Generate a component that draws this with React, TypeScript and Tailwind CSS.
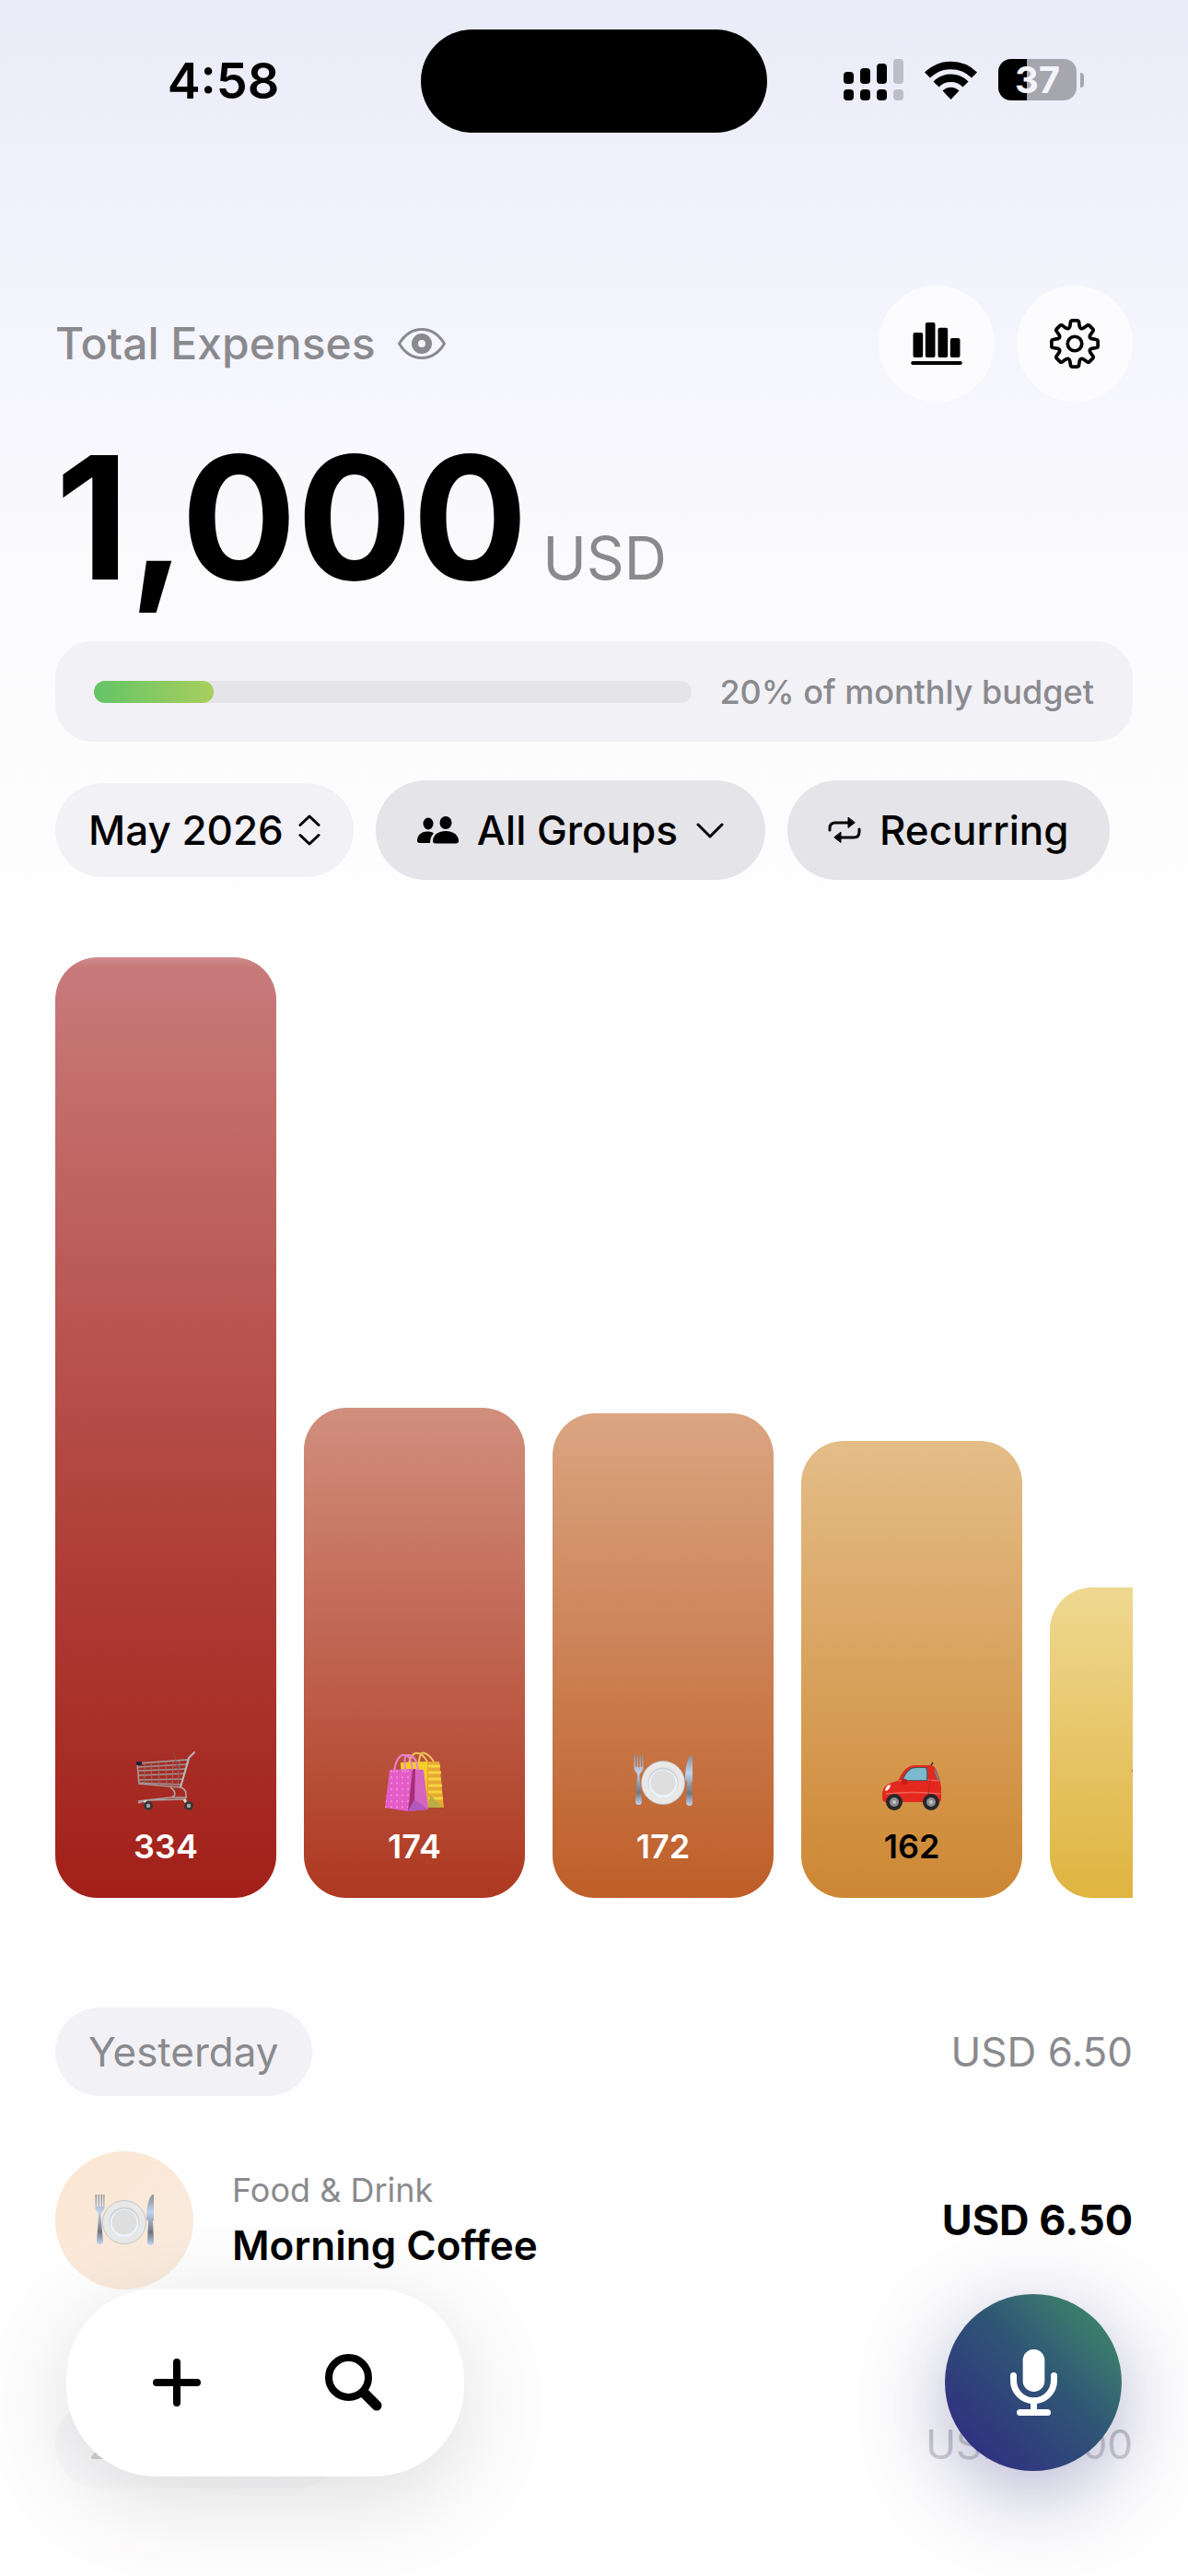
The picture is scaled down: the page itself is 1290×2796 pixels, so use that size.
import { useState } from "react";
import type { ReactNode } from "react";
import clsx from "clsx";

type EmojiName = "cart" | "bags" | "plate" | "car" | "coffee";

interface Category {
  icon: EmojiName;
  amount?: number;
  height: number;
  fill: string;
  text: string;
}

const CATEGORIES: Category[] = [
  {
    icon: "cart",
    amount: 334,
    height: 1021,
    fill: "bg-linear-[180deg,#d18c8e_0%,#c87a7a_1%,#b2453f_56%,#a22018_100%]",
    text: "text-white",
  },
  {
    icon: "bags",
    amount: 174,
    height: 532,
    fill: "bg-linear-[180deg,#d18f7e,#ae3820]",
    text: "text-white",
  },
  {
    icon: "plate",
    amount: 172,
    height: 526,
    fill: "bg-linear-[180deg,#daa582,#be5e28]",
    text: "text-white",
  },
  {
    icon: "car",
    amount: 162,
    height: 496,
    fill: "bg-linear-[180deg,#e4bd88,#cd8733]",
    text: "text-black",
  },
  {
    icon: "coffee",
    height: 337,
    fill: "bg-linear-[180deg,#efd891,#dfb440]",
    text: "text-black",
  },
];

const MONTHLY_BUDGET_USED = 20;

// Eight-tooth gear outline around (80, 80)
const gearPath = () => {
  const at = (radius: number, deg: number) => {
    const rad = ((deg - 90) * Math.PI) / 180;
    return `${(80 + radius * Math.cos(rad)).toFixed(1)} ${(80 + radius * Math.sin(rad)).toFixed(1)}`;
  };
  let d = "";
  for (let i = 0; i < 8; i++) {
    const a = i * 45;
    d += `${i === 0 ? "M" : "L"}${at(70, a - 11)} Q${at(75, a - 10)} ${at(75, a - 6)} L${at(75, a + 6)} Q${at(75, a + 10)} ${at(70, a + 11)} `;
    d += `L${at(57, a + 16)} Q${at(49, a + 22.5)} ${at(57, a + 29)} `;
  }
  return d + "Z";
};

function CartEmoji() {
  return (
    <svg viewBox="0 0 66 66" className="size-[66px]" fill="none" aria-hidden="true">
      <path d="M2 14 58 10 49 40 4 36Z" stroke="#a39a98" strokeWidth="1.6" />
      <path d="M3 18 56 15M3 22 55 20M3 27 53 25M4 32 52 31M3 35 50 37" stroke="#a09593" strokeWidth="1.3" />
      <path d="M10 14v22M17 13l1 24M25 13l1 25M33 12l1 26M41 12l-1 27M48 11l-2 28" stroke="#94706c" strokeWidth="1" />
      <path d="M42 2l2 10 4 14" stroke="#8c4d4a" strokeWidth="1" />
      <path d="M64 2 58 8 49 40" stroke="#b9b5b4" strokeWidth="2" strokeLinecap="round" />
      <path d="M38 40c6 4 7 10 0 11L3 55M50 40c6 4 5 6 5 12M3 57l10-3 42-1M40 51h14" stroke="#aaa3a2" strokeWidth="1.7" />
      <path d="M10 54l4 8M53 53l5 8" stroke="#d9d7d6" strokeWidth="3" />
      <rect x="1" y="12" width="6" height="4" rx="1" fill="#1d2440" />
      <circle cx="14" cy="60" r="5" fill="#3a3636" />
      <circle cx="14" cy="60" r="2.2" fill="#a9a5a4" />
      <circle cx="58" cy="60" r="5" fill="#3a3636" />
      <circle cx="58" cy="60" r="2.2" fill="#a9a5a4" />
    </svg>
  );
}

function BagsEmoji() {
  return (
    <svg viewBox="0 0 66 66" className="size-[66px]" fill="none" aria-hidden="true">
      <defs>
        <pattern id="bag-dots" width="6" height="6.5" patternUnits="userSpaceOnUse">
          <circle cx="2" cy="3" r="0.9" fill="#f9a6e2" />
        </pattern>
      </defs>
      <path d="M27 14C29 5 33 2 37 3c4 0 7 4 10 9M38 14C38 5 41 1 44 3c4 1 8 6 10 9" stroke="#eec35c" strokeWidth="2" />
      <path d="M18 13 47 12 49 62 20 60Z" fill="#f4cf28" />
      <path d="M47 12h13l5 50H46Z" fill="#e8a733" />
      <path d="M48 17h13M48 24h14M48 31h14M48 38h15M48 45h15M48 52h16" stroke="#f6d440" strokeWidth="3" />
      <path d="M50 48 64 62H48Z" fill="#b9ab42" />
      <path d="M6 21 31 20 26 66 1 62Z" fill="#e45cc7" />
      <path d="M6 21 31 20 26 66 1 62Z" fill="url(#bag-dots)" />
      <path d="M31 20 43 21 48 64 26 66Z" fill="#d565c0" />
      <path d="M31 20h3l-1 34-7 12Z" fill="#a92c78" />
      <path d="M33 53 48 64 26 66Z" fill="#b158bd" />
      <path d="M11 24C12 10 18 4 22 5c5 0 8 6 9 16M23 24C22 9 22 4 27 5c6 1 9 7 10 16" stroke="#e884cf" strokeWidth="2" />
    </svg>
  );
}

function PlateEmoji() {
  return (
    <svg viewBox="0 0 66 66" className="size-[66px]" aria-hidden="true">
      <defs>
        <linearGradient id="steel" x1="0" y1="0" x2="0" y2="1">
          <stop offset="0" stopColor="#8b8d94" />
          <stop offset="0.35" stopColor="#bfd3ee" />
          <stop offset="0.75" stopColor="#70757f" />
          <stop offset="1" stopColor="#c3d8f4" />
        </linearGradient>
      </defs>
      <path
        d="M1.500 5v14c0 4 4 4 3.500 9L3 56c0 4 7 4 7 0L7.500 28c0-5 4-5 4-9V5h-1.300v13H9V5H7.500v13H6V5H4.500v13H3V5Z"
        fill="url(#steel)"
      />
      <path d="M64 5c-4 1-7 14-7 26 0 2 2 2 2 3l-1 23c0 4 7 4 7 0l-1-23 1-1V5Z" fill="url(#steel)" />
      <circle cx="33" cy="35" r="23.500" fill="#e8e8e8" stroke="#bcbcbe" strokeWidth="0.800" />
      <circle cx="33" cy="35" r="16.500" fill="#cfd2d8" />
      <circle cx="33" cy="36" r="15.500" fill="#edf2fb" />
      <circle cx="33" cy="35" r="13.500" fill="#dedede" />
    </svg>
  );
}

function CarEmoji() {
  return (
    <svg viewBox="0 0 66 66" className="size-[66px]" aria-hidden="true">
      <path d="M53 18 56 13" stroke="#403436" strokeWidth="1.600" />
      <path
        d="M1 50c0-9 3-14 17-17 5-10 9-17 20-17h13c5 0 7 1 9 6 2 5 4 10 5 18v12c0 3-1 4-3 4H5c-3 0-4-2-4-6Z"
        fill="#e2281f"
      />
      <path d="M19 33c8-1 28-2 44 0M5 47c18-2 38-2 59 0" stroke="#f26358" strokeWidth="1.300" fill="none" />
      <path d="M22 33C26 22 31 18 38 18h11c2 5 2 10 1 15Z" fill="#4a5860" />
      <path d="M24 32C27 23 32 19 38 19h10c2 5 1 9 1 13Z" fill="#7cb9cc" />
      <path d="M57 19c3 4 5 9 6 15-3-3-5-9-6-15Z" fill="#5a8b9a" />
      <path d="M53 32 50 56" stroke="#bb1c18" strokeWidth="0.800" />
      <rect x="22" y="31" width="6" height="6" rx="2" fill="#c81d18" />
      <path d="M4 43c1-4 3-6 6-6 0 3-2 6-5 7Z" fill="#fff3ed" />
      <circle cx="14" cy="56" r="9" fill="#27272a" />
      <circle cx="14" cy="56" r="5" fill="#8d8d90" />
      <circle cx="14" cy="56" r="2" fill="#c6c6c8" />
      <circle cx="54" cy="56" r="9" fill="#27272a" />
      <circle cx="54" cy="56" r="5" fill="#8d8d90" />
      <circle cx="54" cy="56" r="2" fill="#c6c6c8" />
    </svg>
  );
}

function CoffeeEmoji() {
  return (
    <svg viewBox="0 0 66 66" className="size-[66px]" aria-hidden="true">
      <ellipse cx="33" cy="22" rx="31" ry="6" fill="#a2613b" />
    </svg>
  );
}

const EMOJI: Record<EmojiName, () => ReactNode> = {
  cart: CartEmoji,
  bags: BagsEmoji,
  plate: PlateEmoji,
  car: CarEmoji,
  coffee: CoffeeEmoji,
};

function StatusBar() {
  return (
    <div className="grid grid-cols-[1fr_376px_1fr] items-center pt-8">
      <div className="pl-7 text-center text-[54px] leading-[64px] font-semibold">4:58</div>
      <div className="h-28 rounded-full bg-black" />
      <div className="flex items-center justify-center gap-[23px] pr-[30px] pb-[3px]">
        <svg viewBox="0 0 65 45" className="h-[45px] w-[65px]" aria-hidden="true">
          <rect x="0" y="14" width="11" height="13" rx="4" />
          <rect x="18" y="10" width="11" height="17" rx="4" />
          <rect x="36" y="5" width="11" height="22" rx="4" />
          <rect x="54" y="0" width="11" height="27" rx="4" fill="#bdbdc8" />
          <rect x="0" y="33" width="11" height="12" rx="4" />
          <rect x="18" y="33" width="11" height="12" rx="4" />
          <rect x="36" y="33" width="11" height="12" rx="4" />
          <rect x="54" y="33" width="11" height="12" rx="4" fill="#bdbdc8" />
        </svg>
        <svg viewBox="0 0 57 42" className="h-[42px] w-[57px]" fill="none" aria-hidden="true">
          <path d="M3 15.500a36.500 36.500 0 0 1 51 0" stroke="#000" strokeWidth="8.500" />
          <path d="M12.500 25.500a22.500 22.500 0 0 1 32 0" stroke="#000" strokeWidth="8.500" />
          <path d="M28.500 42l-9-9.500a12.500 12.500 0 0 1 18 0Z" fill="#000" />
        </svg>
        <div className="flex items-center gap-1">
          <div className="flex h-[45px] w-[85px] items-center justify-center rounded-[14px] bg-linear-[90deg,#000_31px,#a6a6af_31px] text-[40px] leading-[45px] font-bold text-[#f4f4fb]">
            37
          </div>
          <div className="h-4 w-1 rounded-r-full bg-[#a6a6af]" />
        </div>
      </div>
    </div>
  );
}

function RoundButton({ label, children }: { label: string; children: ReactNode }) {
  return (
    <button aria-label={label} className="flex size-[126px] items-center justify-center rounded-full bg-white/70">
      {children}
    </button>
  );
}

function DayHeader({ day, total }: { day: string; total: string }) {
  return (
    <div className="flex items-center justify-between text-[44px] leading-[96px] text-[#8a8a8e]">
      <h2 className="rounded-full bg-[#f2f1f6] px-9">{day}</h2>
      <span>{total}</span>
    </div>
  );
}

export default function App() {
  const [hidden, setHidden] = useState(false);

  return (
    <div className="relative h-screen overflow-hidden bg-[#fdfdfe] bg-linear-[180deg,#e9ebf8_0px,#f4f4fd_320px,#fbfbfd_640px,#fefefe_1000px] font-['Inter','Liberation_Sans',sans-serif] text-black">
      <StatusBar />

      <main className="px-[60px] pt-[166px]">
        <header className="flex items-center justify-between">
          <div className="flex items-center gap-6 text-[#8a8a8e]">
            <h1 className="text-[48px] leading-[60px] font-medium">Total Expenses</h1>
            <button aria-label="Toggle amounts" onClick={() => setHidden(!hidden)}>
              <svg viewBox="0 0 52 34" className="h-[34px] w-[52px]" fill="none" stroke="currentColor" aria-hidden="true">
                <path d="M1.500 17C7 8 15 1.500 26 1.500S45 8 50.500 17C45 26 37 32.500 26 32.500S7 26 1.500 17Z" strokeWidth="3" />
                <circle cx="26" cy="17" r="7.500" strokeWidth="7" />
              </svg>
            </button>
          </div>
          <div className="flex gap-6">
            <RoundButton label="Statistics">
              <svg viewBox="0 0 167 138" className="h-[46px] w-14" aria-hidden="true">
                <rect x="7" y="33" width="32" height="81" rx="6" />
                <rect x="47" y="0" width="32" height="114" rx="6" />
                <rect x="88" y="17" width="32" height="97" rx="6" />
                <rect x="128" y="51" width="32" height="63" rx="6" />
                <rect x="0" y="126" width="167" height="12" rx="6" />
              </svg>
            </RoundButton>
            <RoundButton label="Settings">
              <svg viewBox="0 0 160 160" className="size-[54px]" fill="none" stroke="#000" strokeWidth="11" strokeLinejoin="round" aria-hidden="true">
                <path d={gearPath()} />
                <circle cx="80" cy="80" r="23" />
              </svg>
            </RoundButton>
          </div>
        </header>

        <p className="mt-8 flex items-baseline gap-4">
          <span className="text-[186px] leading-[188px] font-bold">{hidden ? "•••" : "1,000"}</span>
          <span className="text-[64px] text-[#8a8a8e]">USD</span>
        </p>

        <section className="mt-10 flex h-[109px] items-center gap-[30px] rounded-[40px] bg-[#f2f1f6] px-[42px]">
          <div
            role="progressbar"
            aria-label="Monthly budget"
            aria-valuenow={MONTHLY_BUDGET_USED}
            className="h-6 flex-1 rounded-full bg-[#e5e4e9]"
          >
            <div
              className="h-full rounded-full bg-linear-[90deg,#63c466,#a9ce5e]"
              style={{ width: `${MONTHLY_BUDGET_USED}%` }}
            />
          </div>
          <span className="text-[36px] leading-[44px] font-medium text-[#8a8a8e]">
            {MONTHLY_BUDGET_USED}% of monthly budget
          </span>
        </section>

        <nav className="mt-[42px] flex items-center gap-6 text-[44px] font-medium whitespace-nowrap">
          <button className="flex h-[102px] items-center gap-4 rounded-full bg-[#f2f1f6] px-9">
            May 2026
            <svg viewBox="0 0 24 34" className="h-[34px] w-6" fill="none" stroke="#000" strokeWidth="3" strokeLinecap="round" strokeLinejoin="round" aria-hidden="true">
              <path d="M2 11.500 12 2l10 9.500M2 22.500 12 32l10-9.500" />
            </svg>
          </button>
          <button className="flex h-[108px] items-center gap-5 rounded-full bg-[#e5e4e9] px-[45px]">
            <svg viewBox="0 0 45 30" className="h-[30px] w-[45px]" aria-hidden="true">
              <ellipse cx="12" cy="8" rx="5.500" ry="6.500" />
              <path d="M0 27c0-6 4-10.500 11-10.500 3 0 5 .500 7 2-3 3-4 6-4 10.500H3c-2 0-3-1-3-2Z" />
              <ellipse cx="31" cy="7" rx="6.500" ry="7" />
              <path d="M17 27c0-6 5-11 14-11s14 5 14 11c0 1.500-1 2.500-3 2.500H20c-2 0-3-1-3-2.500Z" />
            </svg>
            All Groups
            <svg viewBox="0 0 30 17" className="h-[17px] w-[30px]" fill="none" stroke="#000" strokeWidth="3" strokeLinecap="round" strokeLinejoin="round" aria-hidden="true">
              <path d="M2 2l13 13L28 2" />
            </svg>
          </button>
          <button className="flex h-[108px] items-center gap-5 rounded-full bg-[#e5e4e9] px-11">
            <svg viewBox="0 0 36 30" className="h-[30px] w-9" fill="none" stroke="#000" strokeWidth="3" strokeLinecap="round" aria-hidden="true">
              <path d="M2 15v-2c0-4 2-6 6-6h14M34 14v3c0 4-2 6-6 6H14" />
              <path d="M22 1.500v11l7-5.500ZM14 17.500v11L7 23Z" fill="#000" strokeWidth="1" strokeLinejoin="round" />
            </svg>
            Recurring
          </button>
        </nav>

        <section aria-label="Expenses by category" className="mt-[84px] flex items-end gap-[30px] overflow-hidden">
          {CATEGORIES.map(({ icon, amount, height, fill, text }) => {
            const Icon = EMOJI[icon];
            return (
              <div
                key={icon}
                className={clsx(
                  "flex w-60 shrink-0 flex-col items-center justify-end rounded-[46px] pb-[34px] text-[36px] leading-[44px] font-semibold",
                  fill,
                  text,
                )}
                style={{ height }}
              >
                <Icon />
                <span className="h-[60px] pt-4">{amount}</span>
              </div>
            );
          })}
        </section>

        <section className="mt-[119px]">
          <DayHeader day="Yesterday" total="USD 6.50" />
          <div className="mt-[60px] flex items-center gap-[42px]">
            <div className="flex size-[150px] items-center justify-center rounded-full bg-linear-[135deg,#fce6d2,#f8ece0]">
              <PlateEmoji />
            </div>
            <div className="flex-1">
              <p className="text-[36px] leading-[54px] text-[#8a8a8e]">Food &amp; Drink</p>
              <p className="text-[44px] leading-[66px] font-semibold">Morning Coffee</p>
            </div>
            <span className="text-[45px] leading-[60px] font-bold">USD 6.50</span>
          </div>
        </section>

        <section className="mt-[120px]">
          <DayHeader day="28 Apr, Tue" total="USD 26.00" />
          <div className="mt-[60px] size-[150px] rounded-full bg-[#fbdcdc]" />
        </section>
      </main>

      <div className="absolute inset-x-0 bottom-0 flex h-[316px] items-start justify-between bg-linear-[180deg,#fefefe00,#fefefe_96%] px-[72px]">
        <div className="mt-1 flex h-[204px] items-center rounded-[98px] bg-white px-6 shadow-[0_24px_100px_rgba(0,0,0,0.13)]">
          <button aria-label="Add expense" className="flex h-full w-48 items-center justify-center">
            <svg viewBox="0 0 52 52" className="size-[52px]" stroke="#000" strokeWidth="8" strokeLinecap="round" aria-hidden="true">
              <path d="M26 4v44M4 26h44" />
            </svg>
          </button>
          <button aria-label="Search" className="flex h-full w-48 items-center justify-center">
            <svg viewBox="0 0 62 62" className="size-[62px]" fill="none" stroke="#000" strokeLinecap="round" aria-hidden="true">
              <circle cx="25.500" cy="25.500" r="21.500" strokeWidth="8" />
              <path d="M43 43 56 56" strokeWidth="11" />
            </svg>
          </button>
        </div>
        <button
          aria-label="Record expense"
          className="mt-[10px] flex size-48 items-center justify-center rounded-full bg-linear-[45deg,#30327f_15%,#2f5576_55%,#3c7e6c_85%] shadow-[0_24px_90px_rgba(48,48,127,0.36)]"
        >
          <svg viewBox="0 0 153 216" className="h-[72px] w-[51px]" fill="none" stroke="#fff" strokeWidth="21" strokeLinecap="round" aria-hidden="true">
            <rect x="41" y="0" width="71" height="138" rx="35.500" fill="#fff" stroke="none" />
            <path d="M10.500 85.500v16a66 66 0 0 0 132 0v-16M76.500 168v37M31.500 205.500h90" />
          </svg>
        </button>
      </div>
    </div>
  );
}
